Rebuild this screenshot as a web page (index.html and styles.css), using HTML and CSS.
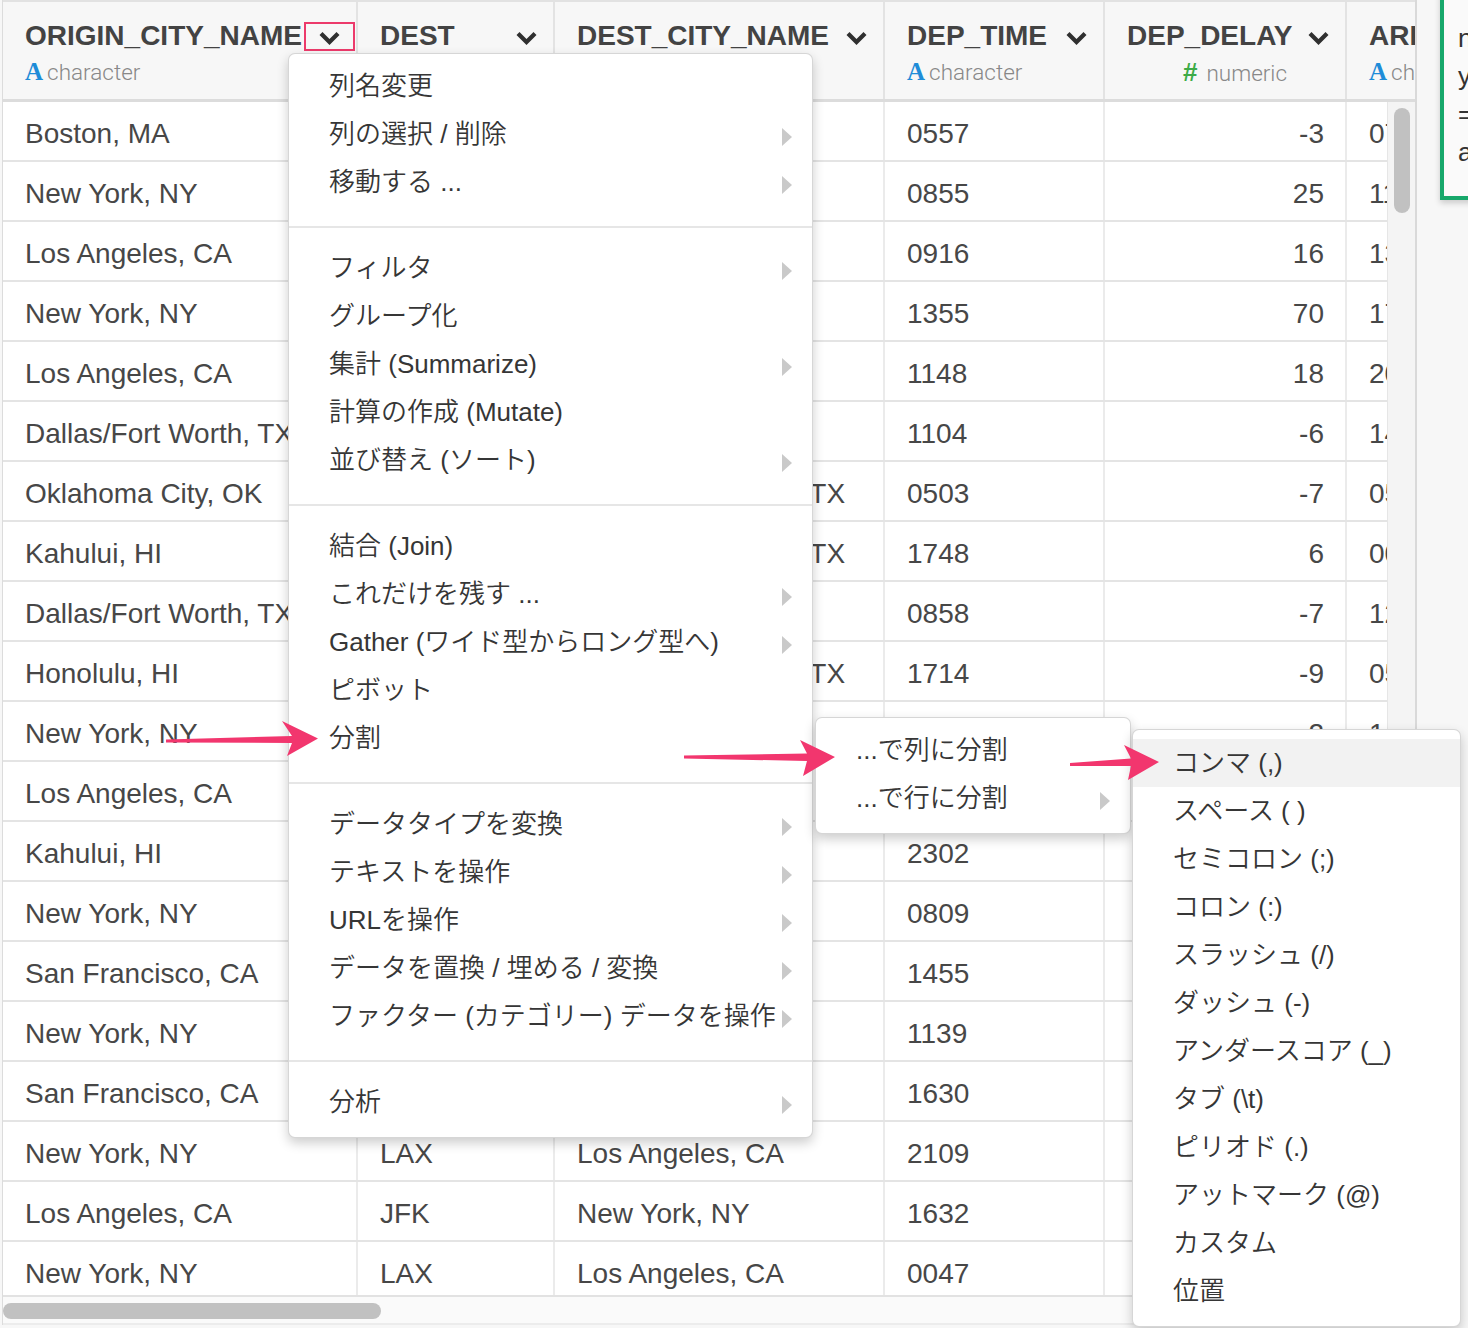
FILE: index.html
```html
<!DOCTYPE html>
<html lang="ja">
<head>
<meta charset="utf-8">
<title>Data grid</title>
<link rel="stylesheet" href="styles.css">
</head>
<body>
<div class="app">
  <div class="pane">
    <div class="thead">
      <div class="hcell c1">
        <div class="htitle"><span>ORIGIN_CITY_NAME</span><svg class="chev" viewBox="0 0 20 13"><path d="M0 3 L3 0 L10 7 L17 0 L20 3 L10 13 Z"/></svg></div>
        <div class="htype"><span class="tA">A</span>character</div>
        <div class="redbox"></div>
      </div>
      <div class="hcell c2">
        <div class="htitle"><span>DEST</span><svg class="chev" viewBox="0 0 20 13"><path d="M0 3 L3 0 L10 7 L17 0 L20 3 L10 13 Z"/></svg></div>
        <div class="htype"><span class="tA">A</span>character</div>
      </div>
      <div class="hcell c3">
        <div class="htitle"><span>DEST_CITY_NAME</span><svg class="chev" viewBox="0 0 20 13"><path d="M0 3 L3 0 L10 7 L17 0 L20 3 L10 13 Z"/></svg></div>
        <div class="htype"><span class="tA">A</span>character</div>
      </div>
      <div class="hcell c4">
        <div class="htitle"><span>DEP_TIME</span><svg class="chev" viewBox="0 0 20 13"><path d="M0 3 L3 0 L10 7 L17 0 L20 3 L10 13 Z"/></svg></div>
        <div class="htype"><span class="tA">A</span>character</div>
      </div>
      <div class="hcell c5">
        <div class="htitle"><span>DEP_DELAY</span><svg class="chev" viewBox="0 0 20 13"><path d="M0 3 L3 0 L10 7 L17 0 L20 3 L10 13 Z"/></svg></div>
        <div class="htype numtype"><span class="tHash">#</span>numeric</div>
      </div>
      <div class="hcell c6">
        <div class="htitle"><span>ARR_TIME</span><svg class="chev" viewBox="0 0 20 13"><path d="M0 3 L3 0 L10 7 L17 0 L20 3 L10 13 Z"/></svg></div>
        <div class="htype"><span class="tA">A</span>character</div>
      </div>
    </div>

    <div class="tbody">
      <div class="rows">
        <div class="row"><div class="cell c1">Boston, MA</div><div class="cell c2">LAX</div><div class="cell c3">Los Angeles, CA</div><div class="cell c4">0557</div><div class="cell c5 num">-3</div><div class="cell c6">0722</div></div>
        <div class="row"><div class="cell c1">New York, NY</div><div class="cell c2">LAX</div><div class="cell c3">Los Angeles, CA</div><div class="cell c4">0855</div><div class="cell c5 num">25</div><div class="cell c6">1119</div></div>
        <div class="row"><div class="cell c1">Los Angeles, CA</div><div class="cell c2">JFK</div><div class="cell c3">New York, NY</div><div class="cell c4">0916</div><div class="cell c5 num">16</div><div class="cell c6">1302</div></div>
        <div class="row"><div class="cell c1">New York, NY</div><div class="cell c2">SFO</div><div class="cell c3">San Francisco, CA</div><div class="cell c4">1355</div><div class="cell c5 num">70</div><div class="cell c6">1725</div></div>
        <div class="row"><div class="cell c1">Los Angeles, CA</div><div class="cell c2">JFK</div><div class="cell c3">New York, NY</div><div class="cell c4">1148</div><div class="cell c5 num">18</div><div class="cell c6">2008</div></div>
        <div class="row"><div class="cell c1">Dallas/Fort Worth, TX</div><div class="cell c2">HNL</div><div class="cell c3">Honolulu, HI</div><div class="cell c4">1104</div><div class="cell c5 num">-6</div><div class="cell c6">1420</div></div>
        <div class="row"><div class="cell c1">Oklahoma City, OK</div><div class="cell c2">DFW</div><div class="cell c3">Dallas/Fort Worth, TX</div><div class="cell c4">0503</div><div class="cell c5 num">-7</div><div class="cell c6">0530</div></div>
        <div class="row"><div class="cell c1">Kahului, HI</div><div class="cell c2">DFW</div><div class="cell c3">Dallas/Fort Worth, TX</div><div class="cell c4">1748</div><div class="cell c5 num">6</div><div class="cell c6">0010</div></div>
        <div class="row"><div class="cell c1">Dallas/Fort Worth, TX</div><div class="cell c2">OGG</div><div class="cell c3">Kahului, HI</div><div class="cell c4">0858</div><div class="cell c5 num">-7</div><div class="cell c6">1215</div></div>
        <div class="row"><div class="cell c1">Honolulu, HI</div><div class="cell c2">DFW</div><div class="cell c3">Dallas/Fort Worth, TX</div><div class="cell c4">1714</div><div class="cell c5 num">-9</div><div class="cell c6">0525</div></div>
        <div class="row"><div class="cell c1">New York, NY</div><div class="cell c2">LAX</div><div class="cell c3">Los Angeles, CA</div><div class="cell c4">1108</div><div class="cell c5 num">2</div><div class="cell c6">1433</div></div>
        <div class="row"><div class="cell c1">Los Angeles, CA</div><div class="cell c2">JFK</div><div class="cell c3">New York, NY</div><div class="cell c4">0614</div><div class="cell c5 num">-4</div><div class="cell c6">1445</div></div>
        <div class="row"><div class="cell c1">Kahului, HI</div><div class="cell c2">LAX</div><div class="cell c3">Los Angeles, CA</div><div class="cell c4">2302</div><div class="cell c5 num">12</div><div class="cell c6">0640</div></div>
        <div class="row"><div class="cell c1">New York, NY</div><div class="cell c2">SFO</div><div class="cell c3">San Francisco, CA</div><div class="cell c4">0809</div><div class="cell c5 num">-1</div><div class="cell c6">1141</div></div>
        <div class="row"><div class="cell c1">San Francisco, CA</div><div class="cell c2">JFK</div><div class="cell c3">New York, NY</div><div class="cell c4">1455</div><div class="cell c5 num">0</div><div class="cell c6">2318</div></div>
        <div class="row"><div class="cell c1">New York, NY</div><div class="cell c2">SFO</div><div class="cell c3">San Francisco, CA</div><div class="cell c4">1139</div><div class="cell c5 num">-6</div><div class="cell c6">1432</div></div>
        <div class="row"><div class="cell c1">San Francisco, CA</div><div class="cell c2">JFK</div><div class="cell c3">New York, NY</div><div class="cell c4">1630</div><div class="cell c5 num">5</div><div class="cell c6">0048</div></div>
        <div class="row"><div class="cell c1">New York, NY</div><div class="cell c2">LAX</div><div class="cell c3">Los Angeles, CA</div><div class="cell c4">2109</div><div class="cell c5 num">-1</div><div class="cell c6">0003</div></div>
        <div class="row"><div class="cell c1">Los Angeles, CA</div><div class="cell c2">JFK</div><div class="cell c3">New York, NY</div><div class="cell c4">1632</div><div class="cell c5 num">2</div><div class="cell c6">0049</div></div>
        <div class="row"><div class="cell c1">New York, NY</div><div class="cell c2">LAX</div><div class="cell c3">Los Angeles, CA</div><div class="cell c4">0047</div><div class="cell c5 num">-8</div><div class="cell c6">0322</div></div>
      </div>
      <div class="vscroll"><div class="vthumb"></div></div>
    </div>

    <div class="hscroll"><div class="hthumb"></div></div>
  </div>

  <div class="side">
    <div class="note">n<br>y<br>=<br>a</div>
  </div>
</div>

<div class="menu menu-main">
  <div class="item"><span>列名変更</span></div>
  <div class="item"><span>列の選択 / 削除</span><i class="caret"></i></div>
  <div class="item"><span>移動する ...</span><i class="caret"></i></div>
  <div class="sep"></div>
  <div class="item"><span>フィルタ</span><i class="caret"></i></div>
  <div class="item"><span>グループ化</span></div>
  <div class="item"><span>集計 (Summarize)</span><i class="caret"></i></div>
  <div class="item"><span>計算の作成 (Mutate)</span></div>
  <div class="item"><span>並び替え (ソート)</span><i class="caret"></i></div>
  <div class="sep"></div>
  <div class="item"><span>結合 (Join)</span></div>
  <div class="item"><span>これだけを残す ...</span><i class="caret"></i></div>
  <div class="item"><span>Gather (ワイド型からロング型へ)</span><i class="caret"></i></div>
  <div class="item"><span>ピボット</span></div>
  <div class="item"><span>分割</span></div>
  <div class="sep"></div>
  <div class="item"><span>データタイプを変換</span><i class="caret"></i></div>
  <div class="item"><span>テキストを操作</span><i class="caret"></i></div>
  <div class="item"><span>URLを操作</span><i class="caret"></i></div>
  <div class="item"><span>データを置換 / 埋める / 変換</span><i class="caret"></i></div>
  <div class="item"><span>ファクター (カテゴリー) データを操作</span><i class="caret"></i></div>
  <div class="sep"></div>
  <div class="item"><span>分析</span><i class="caret"></i></div>
</div>

<div class="menu menu-split">
  <div class="item"><span>...で列に分割</span></div>
  <div class="item"><span>...で行に分割</span><i class="caret"></i></div>
</div>

<div class="menu menu-delim">
  <div class="item active"><span>コンマ (,)</span></div>
  <div class="item"><span>スペース ( )</span></div>
  <div class="item"><span>セミコロン (;)</span></div>
  <div class="item"><span>コロン (:)</span></div>
  <div class="item"><span>スラッシュ (/)</span></div>
  <div class="item"><span>ダッシュ (-)</span></div>
  <div class="item"><span>アンダースコア (_)</span></div>
  <div class="item"><span>タブ (\t)</span></div>
  <div class="item"><span>ピリオド (.)</span></div>
  <div class="item"><span>アットマーク (@)</span></div>
  <div class="item"><span>カスタム</span></div>
  <div class="item"><span>位置</span></div>
</div>

<svg class="arrows" width="1468" height="1328" viewBox="0 0 1468 1328">
  <polygon points="166,739.5 292,736 282,721 318,738.5 287,756 292,743 166,742.5"/>
  <polygon points="684,755.5 807,753.5 800,740 835,757 803,776 807,761 684,758.5"/>
  <polygon points="1070,763 1131,758.5 1124,745 1159,762 1128,780 1131,766 1070,766"/>
</svg>
</body>
</html>
```

FILE: styles.css
```css
* { box-sizing: border-box; }
html, body { margin: 0; padding: 0; }
body {
  width: 1468px;
  height: 1328px;
  overflow: hidden;
  position: relative;
  background: #f7f7f7;
  font-family: "Liberation Sans", "Noto Sans CJK JP", Arial, sans-serif;
  color: #333;
}

.app { display: flex; height: 1328px; }

.pane {
  margin-left: 2px;
  width: 1415px;
  height: 1325px;
  border-left: 1px solid #dcdcdc;
  border-right: 2px solid #d9d9d9;
  background: #fff;
  display: flex;
  flex-direction: column;
  flex: none;
}

/* column widths */
.c1 { width: 355px; }
.c2 { width: 197px; }
.c3 { width: 330px; }
.c4 { width: 220px; }
.c5 { width: 242px; }
.c6 { width: 220px; }

/* header */
.thead {
  height: 102px;
  flex: none;
  display: flex;
  overflow: hidden;
  background: #f7f7f7;
  border-top: 2px solid #e2e2e2;
  border-bottom: 3px solid #dcdcdc;
}
.hcell {
  flex: none;
  position: relative;
  padding: 14px 16px 0 22px;
  border-right: 2px solid #e3e3e3;
}
.htitle {
  height: 40px;
  display: flex;
  align-items: center;
  justify-content: space-between;
  font-size: 28px;
  font-weight: bold;
  color: #434343;
  white-space: nowrap;
}
.chev {
  flex: none;
  width: 21px;
  height: 13px;
  margin: 5px 0 0 14px;
  fill: #303030;
}
.htype {
  height: 32px;
  line-height: 32px;
  font-family: Roboto, "Liberation Sans", sans-serif;
  font-weight: 300;
  font-size: 22.5px;
  color: #888;
  white-space: nowrap;
}
.numtype { padding-left: 56px; }
.tA {
  font-family: "Liberation Serif", serif;
  font-weight: bold;
  font-size: 25px;
  color: #1e8cd8;
  margin-right: 4px;
}
.tHash {
  font-family: "Liberation Sans", sans-serif;
  font-weight: bold;
  font-size: 26px;
  color: #3dab47;
  margin-right: 9px;
}
.redbox {
  position: absolute;
  left: 301px;
  top: 20px;
  width: 51px;
  height: 29px;
  border: 2px solid #ec3a6b;
}

/* body */
.tbody {
  flex: 1;
  display: flex;
  overflow: hidden;
}
.rows {
  width: 1384px;
  flex: none;
  overflow: hidden;
}
.row {
  display: flex;
  height: 60px;
  border-bottom: 2px solid #e4e4e4;
}
.cell {
  flex: none;
  height: 58px;
  padding: 6px 0 0 22px;
  line-height: 52px;
  font-size: 28px;
  color: #474747;
  white-space: nowrap;
  overflow: hidden;
  border-right: 2px solid #ebebeb;
}
.cell.num {
  text-align: right;
  padding-left: 0;
  padding-right: 21px;
}
.vscroll {
  flex: none;
  width: 28px;
  background: #f4f4f4;
  border-left: 1px solid #e6e6e6;
  padding: 6px 0 0 6px;
}
.vthumb {
  width: 16px;
  height: 105px;
  border-radius: 8px;
  background: #c1c1c1;
}
.hscroll {
  flex: none;
  height: 30px;
  background: #fafafa;
  border-top: 2px solid #e2e2e2;
  border-bottom: 2px solid #ececec;
  padding-top: 6px;
}
.hthumb {
  width: 378px;
  height: 16px;
  border-radius: 8px;
  background: #c1c1c1;
}

/* right side panel */
.side {
  flex: 1;
  overflow: hidden;
  background: #f7f7f7;
}
.note {
  margin: -10px 0 0 23px;
  width: 200px;
  height: 210px;
  border: 4px solid #17a86b;
  background: #fafafa;
  padding: 25px 0 0 14px;
  font-size: 26px;
  line-height: 38px;
  color: #333;
  box-shadow: 0 3px 6px rgba(0, 0, 0, 0.18);
}

/* menus */
.menu {
  position: absolute;
  background: #fff;
  border: 1px solid rgba(0, 0, 0, 0.16);
  border-radius: 7px;
  box-shadow: 0 5px 12px rgba(0, 0, 0, 0.2);
  padding: 8px 0 11px;
  font-size: 26px;
  font-weight: 350;
  color: #363636;
  z-index: 5;
}
.menu-main { left: 288px; top: 53px; width: 525px; }
.menu-split { left: 815px; top: 717px; width: 316px; }
.menu-delim { left: 1132px; top: 729px; width: 329px; padding-top: 9px; }

.item {
  height: 48px;
  line-height: 48px;
  display: flex;
  align-items: center;
  justify-content: space-between;
  padding: 0 20px 0 40px;
  white-space: nowrap;
}
.item.active { background: #f2f2f2; }
.caret {
  flex: none;
  width: 0;
  height: 0;
  border-left: 10px solid #c9c9c9;
  border-top: 9.5px solid transparent;
  border-bottom: 9.5px solid transparent;
  margin-top: 6px;
}
.sep {
  height: 2px;
  background: #e6e6e6;
  margin: 20px 0 16px;
}

.arrows {
  position: absolute;
  left: 0;
  top: 0;
  z-index: 10;
  pointer-events: none;
  fill: #f2366e;
}
```
